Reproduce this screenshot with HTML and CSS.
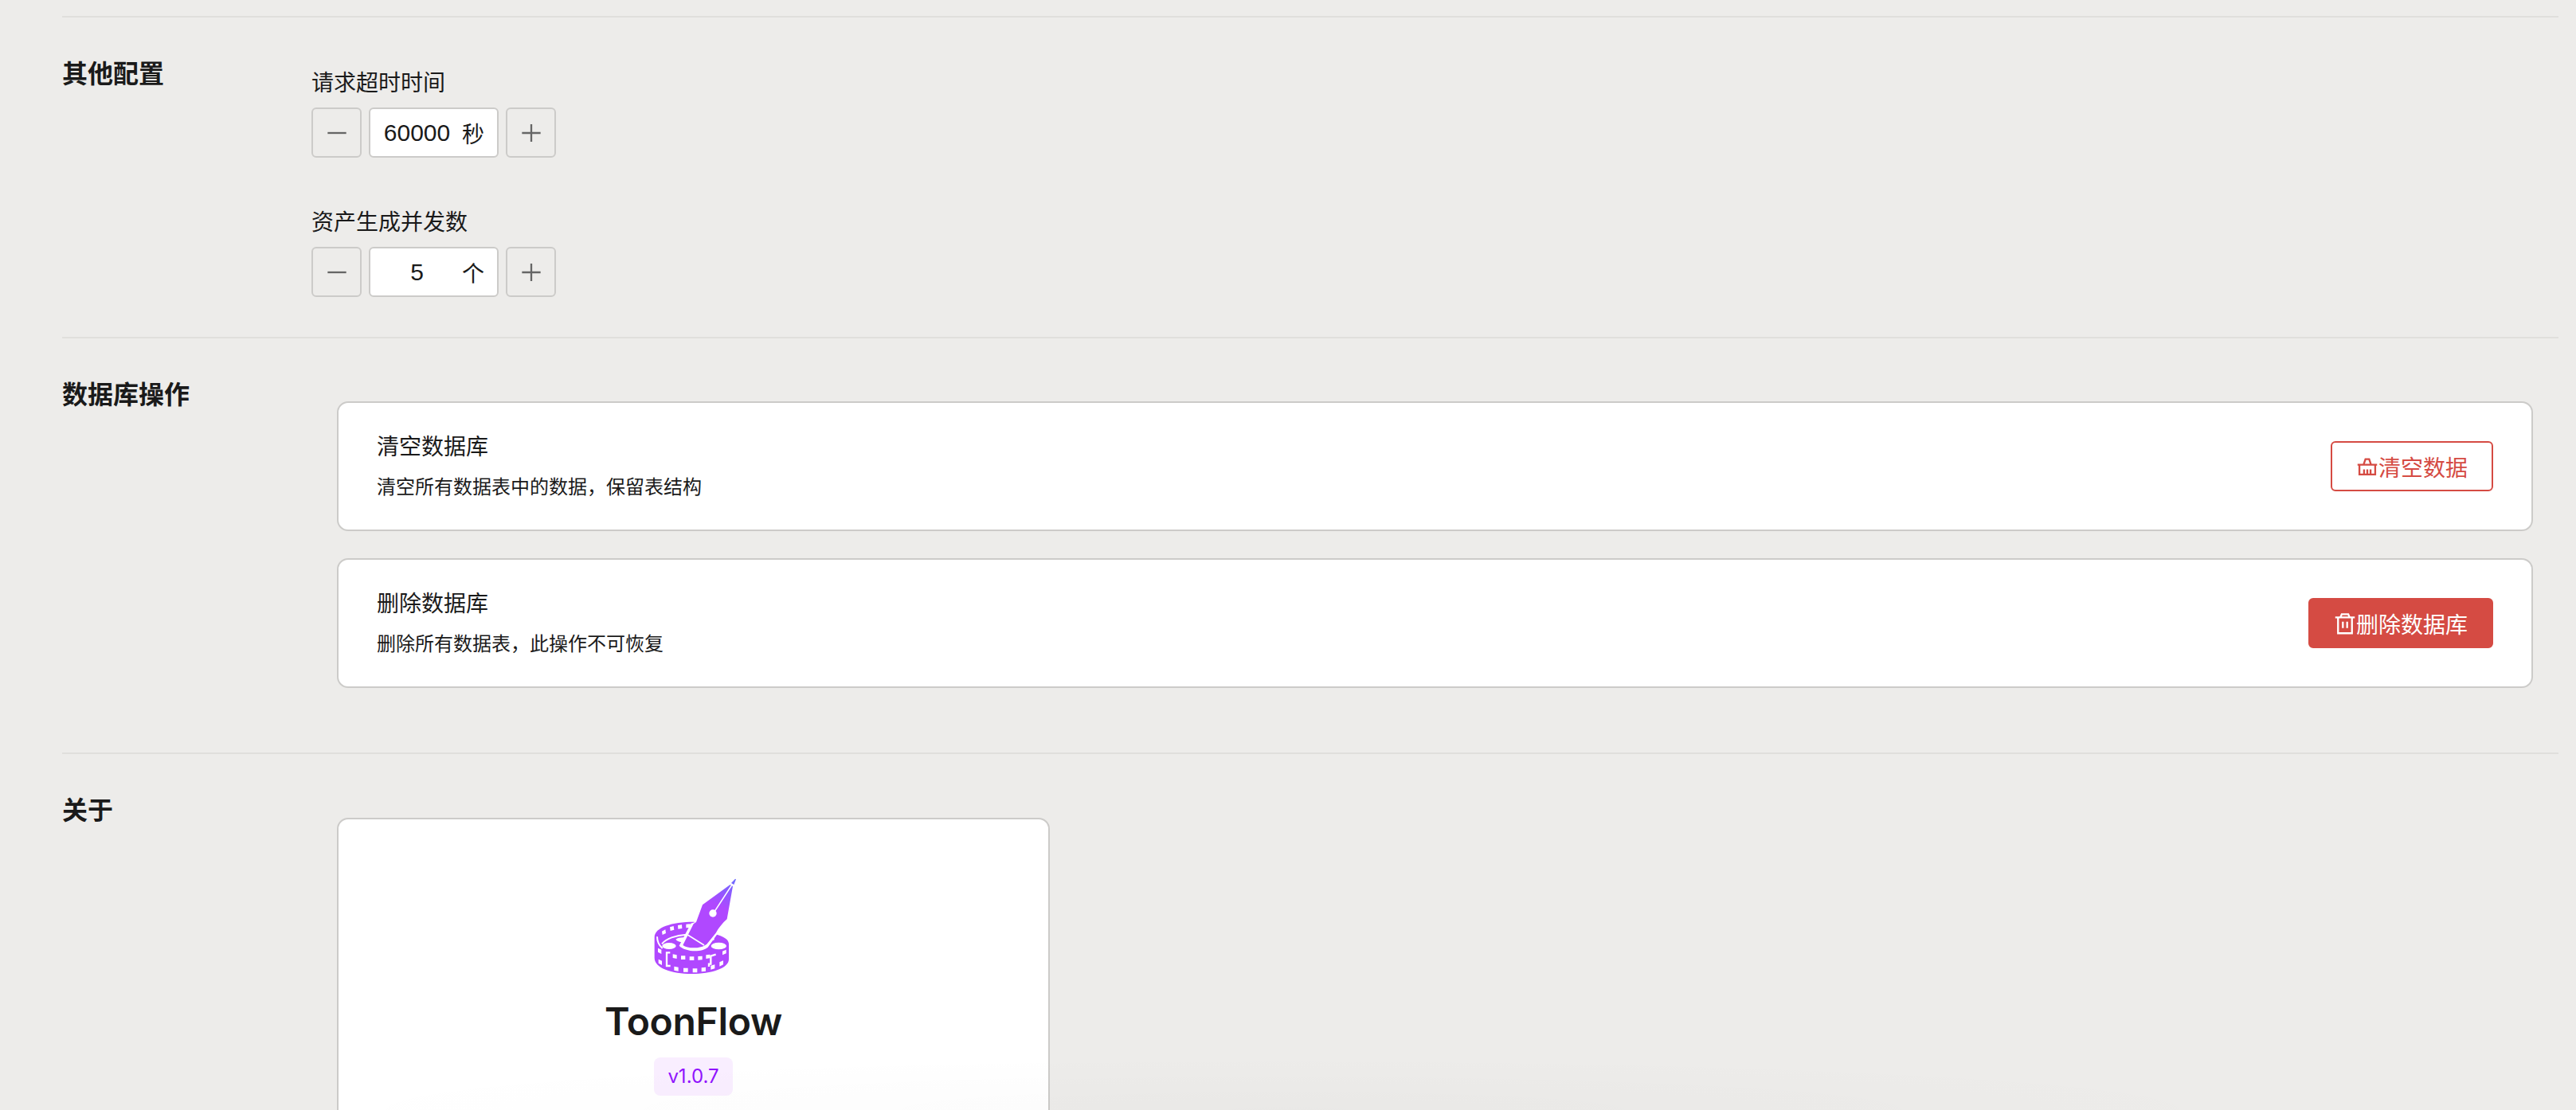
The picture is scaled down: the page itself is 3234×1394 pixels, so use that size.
FILE: index.html
```html
<!DOCTYPE html>
<html lang="zh-CN">
<head>
  <meta charset="UTF-8">
  <meta name="viewport" content="width=device-width, initial-scale=1.0">
  <title>设置 - ToonFlow</title>
  <link rel="stylesheet" href="styles.css">
</head>
<body>
  <div class="settings">

    <section class="section">
      <h3 class="section-title">其他配置</h3>
      <div class="section-body form-list">
        <div class="form-group">
          <label class="form-label">请求超时时间</label>
          <div class="stepper">
            <button class="step-btn" type="button">
              <svg viewBox="0 0 24 24"><path d="M2 12h20"/></svg>
            </button>
            <div class="step-input">
              <span class="step-value">60000</span>
              <span class="step-unit">秒</span>
            </div>
            <button class="step-btn" type="button">
              <svg viewBox="0 0 24 24"><path d="M2 12h20M12 2.5v19"/></svg>
            </button>
          </div>
        </div>
        <div class="form-group">
          <label class="form-label">资产生成并发数</label>
          <div class="stepper">
            <button class="step-btn" type="button">
              <svg viewBox="0 0 24 24"><path d="M2 12h20"/></svg>
            </button>
            <div class="step-input">
              <span class="step-value">5</span>
              <span class="step-unit">个</span>
            </div>
            <button class="step-btn" type="button">
              <svg viewBox="0 0 24 24"><path d="M2 12h20M12 2.5v19"/></svg>
            </button>
          </div>
        </div>
      </div>
    </section>

    <section class="section section-db">
      <h3 class="section-title">数据库操作</h3>
      <div class="section-body card-list">
        <div class="db-card">
          <div class="db-info">
            <div class="db-name">清空数据库</div>
            <div class="db-desc">清空所有数据表中的数据&#xFF0C;保留表结构</div>
          </div>
          <button class="btn btn-outline" type="button">
            <svg class="btn-icon" viewBox="0 0 24 24">
              <path d="M8 10 10 4h4l2 6M1.5 10h21M3.5 10v10.5h17V10M8.5 15v5.5M12 15v5.5M15.5 15v5.5"/>
            </svg>
            清空数据
          </button>
        </div>
        <div class="db-card">
          <div class="db-info">
            <div class="db-name">删除数据库</div>
            <div class="db-desc">删除所有数据表&#xFF0C;此操作不可恢复</div>
          </div>
          <button class="btn btn-danger" type="button">
            <svg class="btn-icon" viewBox="0 0 24 24">
              <path d="M1.5 5.5h21M7 5.5 8.5 2h7L17 5.5M4.5 5.5v17h15v-17M9.7 10v7M14.3 10v7"/>
            </svg>
            删除数据库
          </button>
        </div>
      </div>
    </section>

    <section class="section section-last">
      <h3 class="section-title">关于</h3>
      <div class="section-body card-list">
        <div class="about-card">
          <svg class="logo" viewBox="93 40 360 360">
            <defs>
              <linearGradient id="logoFill" x1="430" y1="42" x2="380" y2="150" gradientUnits="userSpaceOnUse">
                <stop offset="0" stop-color="#6a6cff"/>
                <stop offset="1" stop-color="#b048ff"/>
              </linearGradient>
            </defs>
            <!-- reel -->
            <path fill="#b048ff" d="M125 262C125 225 190 204 274 204L350 250C386 258 405 271 405 287V345C405 378 340 400 265 400C190 400 125 378 125 340Z"/>
            <!-- inner rim and reel holes -->
            <path fill="none" stroke="#fff" stroke-width="6" d="M135 260C135 278 141 292 155 304M153 287C168 268 205 254 246 252"/>
            <ellipse fill="#fff" cx="180" cy="295" rx="26" ry="12"/>
            <ellipse fill="#fff" cx="367" cy="295" rx="29" ry="13"/>
            <path fill="#fff" d="M205 270C215 263 230 262 242 264L234 280C222 281 210 277 205 270ZM335 258C345 260 352 266 350 272 344 276 334 276 328 274Z"/>
            <!-- film holes -->
            <g fill="#fff">
              <path d="M153 240l13-7 2 14-13 6zM183 224l14-4 2 14-14 4zM213 217l15-2 1 14-15 2zM244 213l16-1v14l-16 1z"/>
              <path d="M138 303l13 6v16l-13-7zM140 345l13 6v16l-13-7z"/>
              <path d="M194 326l15 3v14l-15-3zM225 332h16v14h-16zM257 335h17v14h-17zM289 334l16-1v14l-16 1zM319 329l15-2v14l-15 2z"/>
              <path d="M199 372l16 3v15l-16-3zM234 378h17v15h-17zM269 380h17v15h-17zM302 377l16-2v15l-16 2zM337 369l15-4v15l-15 4z"/>
              <path d="M370 356l14-6v15l-14 7zM381 315l14-6v14l-14 6z"/>
            </g>
            <path fill="none" stroke="#fff" stroke-width="7" d="M184 320h-13v50h14M356 327l-19 6v30h-7v10"/>
            <!-- nib -->
            <path fill="#fff" d="M300 134 405 55 435 60 405 200 366 244 326 300C300 322 238 316 218 294L262 210 278 205Z"/>
            <path fill="url(#logoFill)" d="M306 140 410 64 420 70 398 194C380 210 366 228 356 246L322 288C300 306 250 306 232 292L272 212 282 205Z"/>
            <path fill="url(#logoFill)" d="M414 58 429 42 432 44 424 64Z"/>
            <path fill="none" stroke="#fff" stroke-width="5" d="M416 66 348 170M245 250 312 292"/>
            <circle fill="#fff" cx="345" cy="172" r="14"/>
          </svg>
          <div class="app-name">ToonFlow</div>
          <span class="version-tag">v1.0.7</span>
        </div>
      </div>
    </section>

  </div>
  <div class="bottom-fade"></div>
</body>
</html>
```

FILE: styles.css
```css
* {
  margin: 0;
  padding: 0;
  box-sizing: border-box;
}

html, body {
  height: 100%;
  overflow: hidden;
}

body {
  background: #edecea;
  color: #1a1a1a;
  font-family: "Liberation Sans", "Noto Sans CJK SC", sans-serif;
  position: relative;
}

.settings {
  padding: 20px 22px 0 78px;
}

.section {
  display: flex;
  border-top: 2px solid #e0dfdc;
  padding: 47px 0 50px;
}

.section-db {
  padding-bottom: 49px;
}

.section-last {
  padding-bottom: 0;
}

.section-title {
  width: 313px;
  flex-shrink: 0;
  padding-top: 2px;
  font-size: 32px;
  line-height: 44px;
  font-weight: 700;
}

.section-body {
  flex: 1;
  min-width: 0;
}

/* stepper form */
.form-list {
  display: flex;
  flex-direction: column;
  gap: 62px;
  padding-top: 16px;
}

.form-label {
  display: block;
  font-size: 28px;
  line-height: 40px;
  margin-bottom: 10px;
}

.stepper {
  display: flex;
  gap: 9px;
}

.step-btn {
  width: 63px;
  height: 63px;
  display: flex;
  align-items: center;
  justify-content: center;
  background: transparent;
  border: 2px solid #cccbc9;
  border-radius: 6px;
}

.step-btn svg {
  width: 28px;
  height: 28px;
  fill: none;
  stroke: #666;
  stroke-width: 2;
}

.step-input {
  width: 163px;
  height: 63px;
  display: flex;
  align-items: center;
  padding: 0 16px;
  background: #fff;
  border: 2px solid #cccbc9;
  border-radius: 6px;
}

.step-value {
  flex: 1;
  text-align: center;
  font-size: 30px;
}

.step-unit {
  font-size: 28px;
  margin-left: 14px;
}

/* cards */
.card-list {
  display: flex;
  flex-direction: column;
  gap: 34px;
  padding: 32px;
}

.section-last .card-list {
  padding-top: 33px;
}

.db-card {
  height: 163px;
  display: flex;
  align-items: center;
  justify-content: space-between;
  padding: 0 48px;
  background: #fff;
  border: 2px solid #cccbc9;
  border-radius: 14px;
}

.db-name {
  font-size: 28px;
  line-height: 40px;
  margin-bottom: 13px;
}

.db-desc {
  font-size: 24px;
  line-height: 34px;
}

.btn {
  height: 63px;
  display: flex;
  align-items: center;
  padding: 0 30px;
  font-family: inherit;
  font-size: 28px;
  border-radius: 6px;
  border: 2px solid #d54b43;
}

.btn-icon {
  width: 28px;
  height: 28px;
  fill: none;
  stroke: currentColor;
  stroke-width: 2;
}

.btn-outline {
  background: #fff;
  color: #d54b43;
}

.btn-danger {
  background: #d54b43;
  color: #fff;
}

/* about */
.about-card {
  width: 895px;
  height: 600px;
  display: flex;
  flex-direction: column;
  align-items: center;
  padding-top: 74px;
  background: #fff;
  border: 2px solid #cccbc9;
  border-radius: 14px;
}

.logo {
  width: 120px;
  height: 120px;
}

.app-name {
  font-family: Inter, "Liberation Sans", sans-serif;
  font-size: 48px;
  font-weight: 600;
  letter-spacing: -0.3px;
  line-height: 60px;
  margin-top: 30px;
}

.version-tag {
  margin-top: 15px;
  padding: 0 17px;
  height: 48px;
  line-height: 48px;
  font-family: Inter, "Liberation Sans", sans-serif;
  font-size: 24px;
  color: #9013fe;
  background: #f9eeff;
  border-radius: 8px;
}

.bottom-fade {
  position: absolute;
  left: 0;
  right: 0;
  bottom: 0;
  height: 70px;
  pointer-events: none;
  background: radial-gradient(ellipse 40% 100% at 50% 100%, rgba(0, 0, 0, 0.015), rgba(0, 0, 0, 0));
}
```
